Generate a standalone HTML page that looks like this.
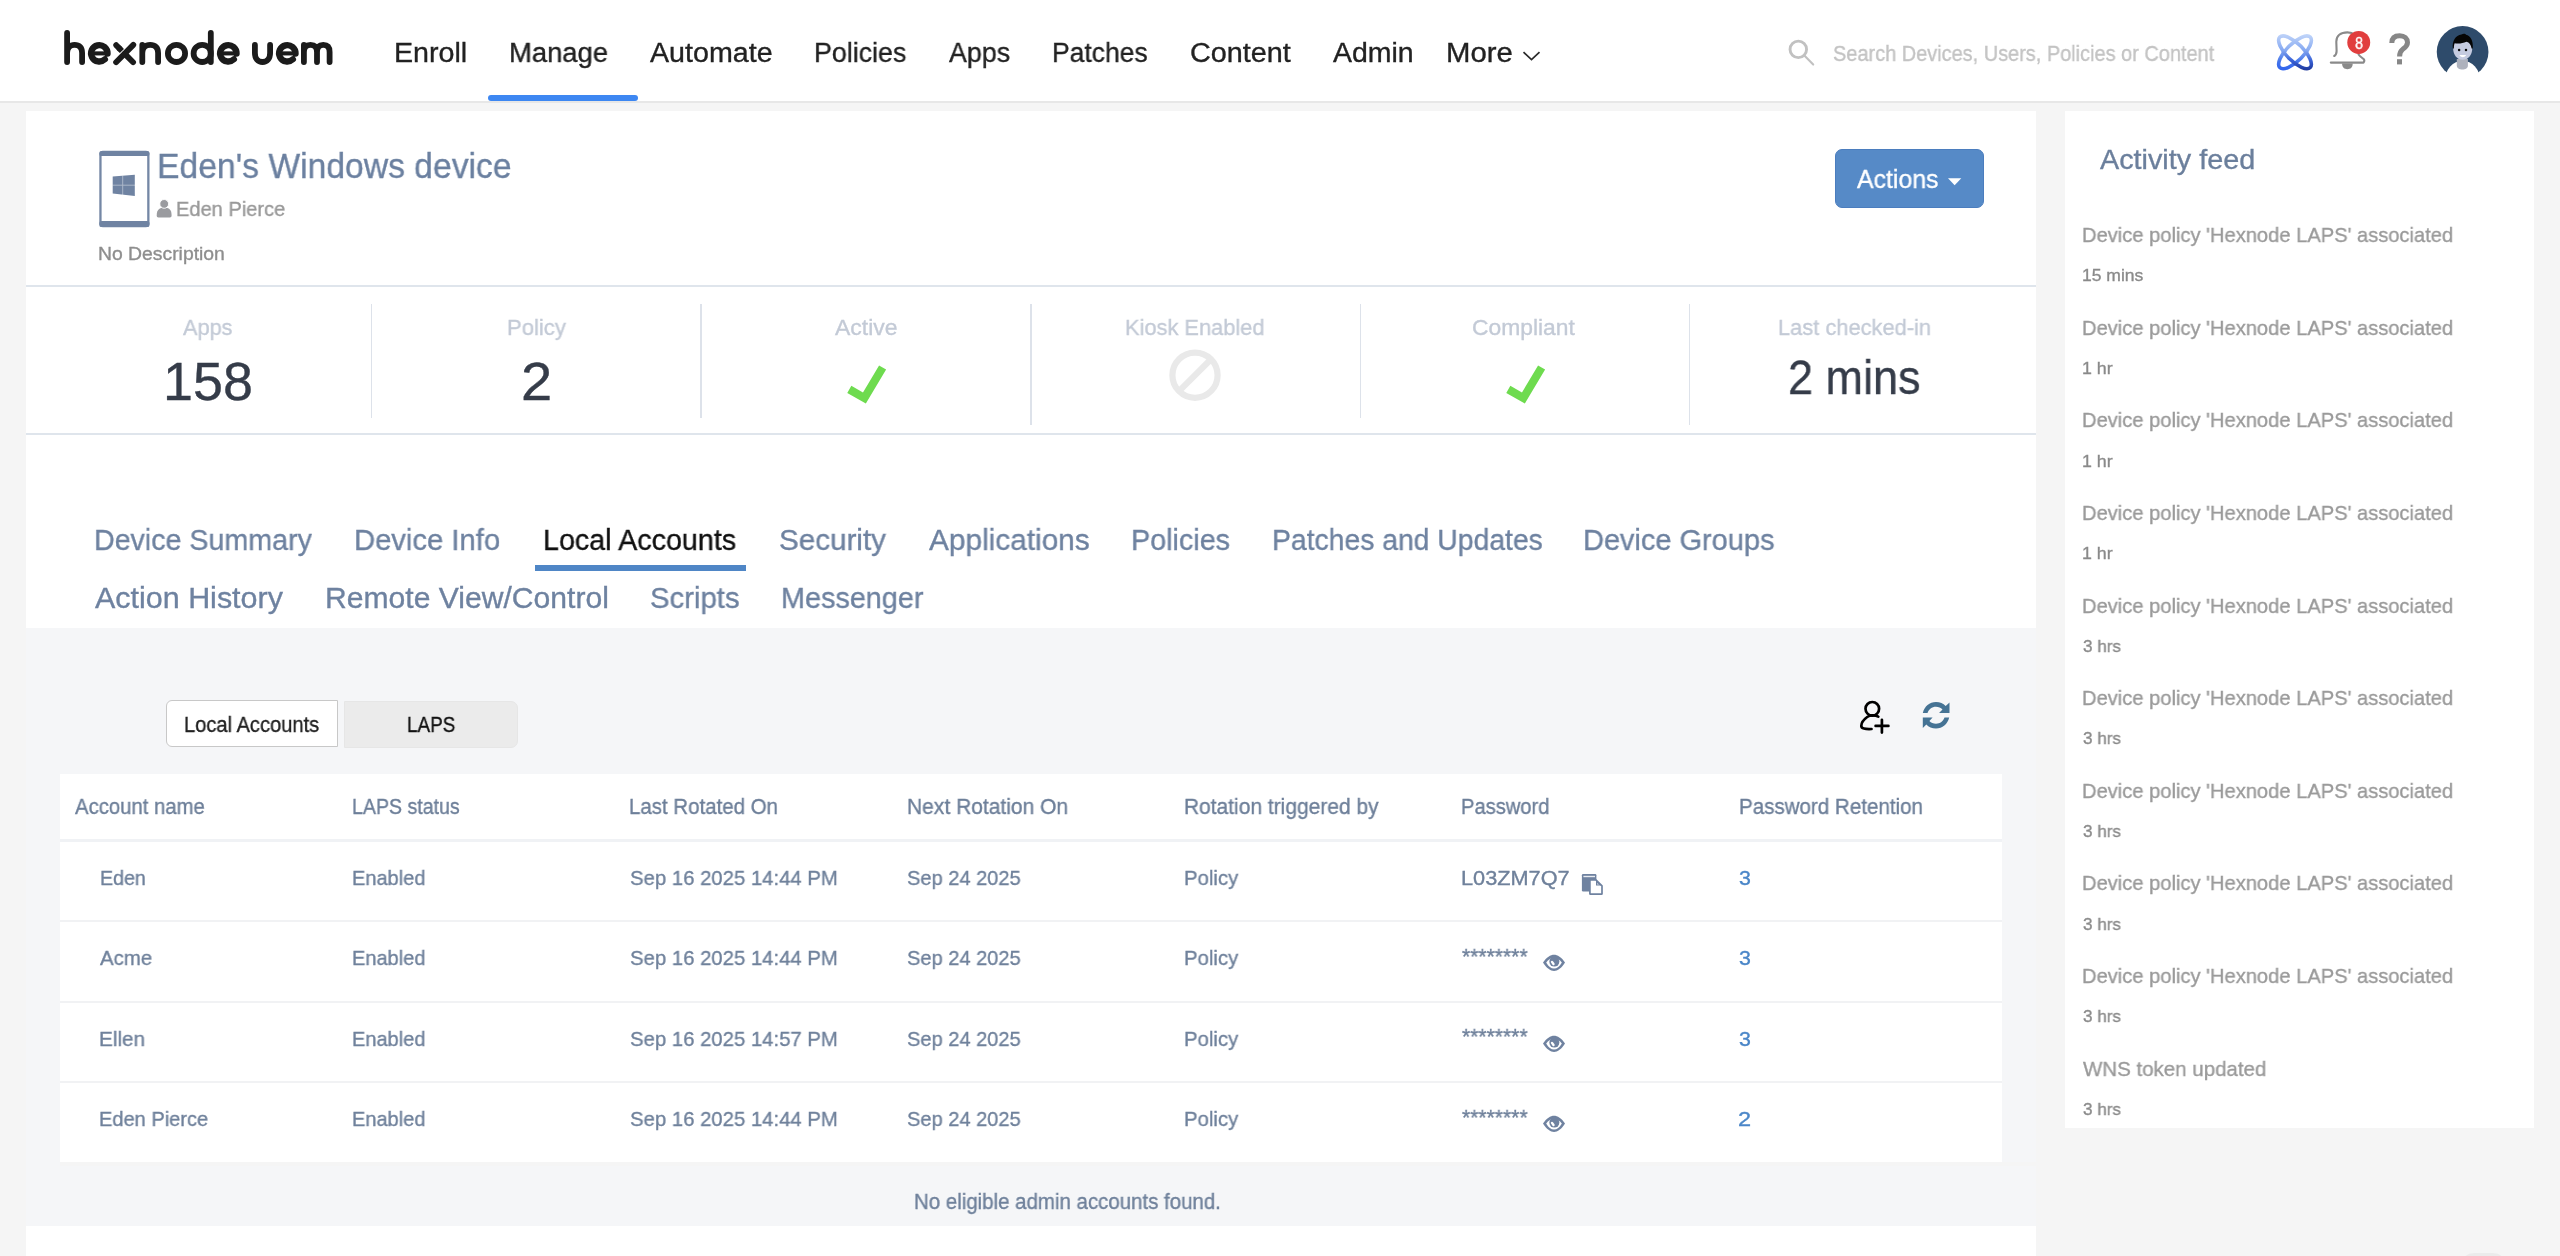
<!DOCTYPE html>
<html>
<head>
<meta charset="utf-8">
<title>Eden's Windows device - Hexnode UEM</title>
<style>
html,body{margin:0;padding:0}
body{width:2560px;height:1256px;overflow:hidden;position:relative;background:#f5f5f5;font-family:"Liberation Sans",sans-serif}
.b{position:absolute}
.t{position:absolute;white-space:nowrap;transform-origin:0 0;font-family:"Liberation Sans",sans-serif;will-change:transform;-webkit-text-stroke:0.35px currentColor}
svg{position:absolute;overflow:visible}
</style>
</head>
<body>
<!-- header -->
<div class="b" style="left:0;top:0;width:2560px;height:101px;background:#fff"></div>
<div class="b" style="left:0;top:101px;width:2560px;height:2px;background:#e7e7e7"></div>
<div class="b" style="left:488.2px;top:95.4px;width:149.8px;height:5.4px;background:#3d87f2;border-radius:3px"></div>

<!-- logo -->
<svg style="left:0;top:0" width="360" height="100" viewBox="0 0 360 100">
<g fill="none" stroke="#1b1b1b" stroke-width="5.8" stroke-linecap="round" stroke-linejoin="round">
<path d="M67.1,62 V33 M67.1,53 C67.1,47.5 70.2,44.9 74.6,44.9 C79.1,44.9 82.1,47.5 82.1,53 V62"/>
<path d="M107.50,53.6 A8.20,8.20 0 1 0 104.90,59.3" stroke-width="6.3"/><path d="M90.85,53.4 H110.15" stroke-width="4.1" stroke-linecap="butt"/>
<path d="M116.2,45.2 L119.5,48.6"/><path d="M118.5,47.6 L121.9,51.0" stroke-linecap="butt"/><path d="M124.8,53.9 L133.1,62.2" /><path d="M133.3,44.9 L116.1,62.2"/>
<path d="M142.3,62 V44.9 M142.3,53 C142.3,47.5 145.5,44.9 150.2,44.9 C154.9,44.9 158.1,47.5 158.1,53 V62"/>
<circle cx="176.5" cy="53.4" r="8.6"/>
<circle cx="202.2" cy="53.4" r="8.6"/>
<path d="M210.8,33 V62"/>
<path d="M236.50,53.6 A8.20,8.20 0 1 0 233.90,59.3" stroke-width="6.3"/><path d="M219.85,53.4 H239.15" stroke-width="4.1" stroke-linecap="butt"/>
<path d="M254.9,44.9 V53 C254.9,58.5 258,62 262.5,62 C267,62 270.1,58.5 270.1,53 V44.9"/>
<path d="M295.50,53.6 A8.20,8.20 0 1 0 292.90,59.3" stroke-width="6.3"/><path d="M278.85,53.4 H298.15" stroke-width="4.1" stroke-linecap="butt"/>
<path d="M303.9,62 V44.9 M303.9,52 C303.9,47 306.5,44.9 310.5,44.9 C314.5,44.9 317,47 317,52 V62 M317,52 C317,47 319.5,44.9 323.3,44.9 C327.1,44.9 329.6,47 329.6,52 V62"/>
</g>
</svg>

<!-- More chevron -->
<svg style="left:1520px;top:48px" width="24" height="16" viewBox="0 0 24 16">
<path d="M3.5,4.2 L11.5,11.6 L19.5,4.2" fill="none" stroke="#2a2a2a" stroke-width="1.7"/>
</svg>

<!-- search icon -->
<svg style="left:1784px;top:36px" width="36" height="36" viewBox="0 0 36 36">
<circle cx="14.3" cy="13.4" r="8.25" fill="none" stroke="#c1c1c1" stroke-width="2.9"/>
<path d="M20.1,19.2 L29.2,28.6" stroke="#c1c1c1" stroke-width="2.1" stroke-linecap="round"/>
</svg>

<!-- atom icon -->
<svg style="left:2270px;top:27px" width="50" height="50" viewBox="0 0 50 50">
<defs>
<linearGradient id="ga" gradientUnits="userSpaceOnUse" x1="25" y1="6" x2="25" y2="44" gradientTransform="rotate(-45 25 25.3)">
<stop offset="0" stop-color="#c3d6f9"/><stop offset="0.45" stop-color="#86a9f2"/><stop offset="0.72" stop-color="#3a63d8"/><stop offset="1" stop-color="#1b3496"/>
</linearGradient>
<linearGradient id="gb" gradientUnits="userSpaceOnUse" x1="25" y1="6" x2="25" y2="44" gradientTransform="rotate(45 25 25.3)">
<stop offset="0" stop-color="#c6d9fa"/><stop offset="0.45" stop-color="#8aacf2"/><stop offset="0.75" stop-color="#4475ea"/><stop offset="1" stop-color="#2f62ee"/>
</linearGradient>
</defs>
<ellipse cx="25" cy="25.3" rx="21.5" ry="8.5" transform="rotate(-45 25 25.3)" fill="none" stroke="url(#gb)" stroke-width="3.6"/>
<ellipse cx="25" cy="25.3" rx="21.5" ry="8.5" transform="rotate(45 25 25.3)" fill="none" stroke="url(#ga)" stroke-width="3.6"/>
</svg>

<!-- bell -->
<svg style="left:2326px;top:28px" width="48" height="46" viewBox="0 0 48 46">
<path d="M8.2,28 C9.8,27 10.6,25.5 10.6,22.9 L10.3,13.7 C10.3,8 14.5,4.4 21.5,4.4 C27.5,4.4 31.5,8 31.8,13.7 L32.6,26.5 C34,28.5 36.5,30 37.8,31.2 C38.4,32 38.4,33.5 37.5,34.6 L4.8,34.6" fill="none" stroke="#8a8a8a" stroke-width="2.1" stroke-linejoin="round" stroke-linecap="round"/>
<path d="M16.1,35.5 C16.1,39.5 18.2,41.2 21.4,41.2 C24.6,41.2 26.7,39.5 26.7,35.5 Z" fill="#8a8a8a"/>
<circle cx="32.75" cy="14.45" r="11.45" fill="#e13e3e"/>
</svg>

<!-- help -->
<svg style="left:2384px;top:30px" width="32" height="38" viewBox="0 0 32 38">
<path d="M7.8,13 C7.8,7 11.5,5.7 15.7,5.7 C20.5,5.7 23.5,8.5 23.5,12.5 C23.5,16 21,17.5 18.5,19.5 C16.5,21 15.6,22.5 15.6,26.6" fill="none" stroke="#878787" stroke-width="5"/>
<rect x="13" y="29.2" width="5" height="5.2" fill="#878787"/>
</svg>

<!-- avatar -->
<svg style="left:2432px;top:20px" width="62" height="62" viewBox="0 0 62 62">
<circle cx="30.6" cy="31.95" r="25.85" fill="#2e4b6b"/>
<ellipse cx="30.6" cy="60.6" rx="17.5" ry="19.9" fill="#ffffff"/>
<path d="M24.8,39 L35.9,39 L35.9,45.5 C35.9,48 33.5,49.6 30.4,49.6 C27.3,49.6 24.8,48 24.8,45.5 Z" fill="#aeb2bd"/>
<path d="M21.2,29 C21.2,22 25,18.2 30.7,18.2 C36.4,18.2 40.2,22 40.2,29 C40.2,34.5 36.5,39.8 30.7,39.8 C24.9,39.8 21.2,34.5 21.2,29 Z" fill="#c5cbe0"/>
<path d="M20.8,28.6 C20,21 23.5,15.6 29.5,14.6 C31,13.6 33.4,13.6 34,14.8 C38.6,16 41.3,20.5 40.8,28.4 L39.6,28.6 C39,24.6 37.3,22.5 34.5,21.8 C30.5,23.6 26,24 22.5,23.2 C22,25 21.8,26.8 21.8,28.6 Z" fill="#050505"/>
<circle cx="27.1" cy="30" r="1.25" fill="#0a0a0a"/>
<circle cx="34" cy="30" r="1.25" fill="#0a0a0a"/>
<path d="M27.3,34.9 C29.5,37.9 32,37.9 34.2,34.9 Z" fill="#ffffff"/>
</svg>

<!-- main card -->
<div class="b" style="left:26px;top:111px;width:2010px;height:517px;background:#fff"></div>
<div class="b" style="left:26px;top:285px;width:2010px;height:2px;background:#dfe5ec"></div>
<div class="b" style="left:26px;top:433px;width:2010px;height:2px;background:#dfe5ec"></div>
<div class="b" style="left:370.8px;top:304px;width:1.6px;height:114px;background:#dde2ea"></div>
<div class="b" style="left:700.4px;top:304px;width:1.6px;height:114px;background:#dde2ea"></div>
<div class="b" style="left:1030px;top:304px;width:1.6px;height:121px;background:#dde2ea"></div>
<div class="b" style="left:1359.6px;top:304px;width:1.6px;height:114px;background:#dde2ea"></div>
<div class="b" style="left:1688.6px;top:304px;width:1.6px;height:121px;background:#dde2ea"></div>

<!-- device icon -->
<svg style="left:90px;top:140px" width="70" height="96" viewBox="0 0 70 96">
<rect x="10.45" y="12" width="47.9" height="74" rx="2.5" fill="none" stroke="#7487a5" stroke-width="2.3"/>
<rect x="9.3" y="10.9" width="50.2" height="5.2" rx="2.2" fill="#6f83a2"/>
<rect x="9.3" y="80.9" width="50.2" height="6.2" rx="2.2" fill="#6f83a2"/>
<path d="M22.7,36.5 L44.8,34.8 L44.8,55.9 L22.7,53.5 Z" fill="#6f83a2"/>
<path d="M32.7,35.5 L32.7,55 M22.5,45.2 L45,45.2" stroke="#ffffff" stroke-width="0.9" opacity="0.45"/>
</svg>

<!-- user glyph -->
<svg style="left:154px;top:196px" width="22" height="24" viewBox="0 0 22 24">
<path d="M2.7,19.4 C2.7,15 4.5,12.4 7.5,11.9 L13.1,11.9 C16.1,12.4 17.6,15 17.6,19.4 C17.6,20.6 17,21.4 15.8,21.4 L4.5,21.4 C3.3,21.4 2.7,20.6 2.7,19.4 Z" fill="#9a9b9f"/>
<circle cx="10.2" cy="7.9" r="4.4" fill="#9a9b9f" stroke="#ffffff" stroke-width="0.9"/>
</svg>

<!-- actions button -->
<div class="b" style="left:1834.8px;top:149px;width:147.4px;height:56.8px;background:#568ac7;border:1px solid #4b7dbe;border-radius:7px"></div>
<svg style="left:1944px;top:174px" width="22" height="16" viewBox="0 0 22 16">
<path d="M4,4.2 L17.3,4.2 L10.65,11.3 Z" fill="#fff"/>
</svg>

<!-- check marks -->
<svg style="left:840px;top:358px" width="54" height="50" viewBox="0 0 54 50">
<path d="M9.3,31.4 L24.4,40 L42.6,9.5" fill="none" stroke="#6edb4f" stroke-width="8.2" stroke-linejoin="miter"/>
</svg>
<svg style="left:1499px;top:358px" width="54" height="50" viewBox="0 0 54 50">
<path d="M9.3,31.4 L24.4,40 L42.6,9.5" fill="none" stroke="#6edb4f" stroke-width="8.2" stroke-linejoin="miter"/>
</svg>

<!-- kiosk ban -->
<svg style="left:1165px;top:345px" width="60" height="60" viewBox="0 0 60 60">
<circle cx="30" cy="30.2" r="22.6" fill="none" stroke="#e9e9e9" stroke-width="6.2"/>
<path d="M14.8,45.4 L45.2,15" stroke="#e9e9e9" stroke-width="6.2"/>
</svg>

<!-- tab underline -->
<div class="b" style="left:534.7px;top:565px;width:211.4px;height:5.5px;background:#4f86c6"></div>

<!-- content area -->
<div class="b" style="left:26px;top:628px;width:2010px;height:598px;background:#f5f6f8"></div>
<div class="b" style="left:26px;top:1226px;width:2010px;height:30px;background:#fff"></div>

<!-- segmented -->
<div class="b" style="left:166px;top:700px;width:170.3px;height:44.9px;background:#fff;border:1.5px solid #c8c8c8;border-radius:6px 0 0 6px"></div>
<div class="b" style="left:344.2px;top:700.7px;width:171.6px;height:44.9px;background:#ebebeb;border:1px solid #e6e6e6;border-radius:0 7px 7px 0"></div>

<!-- add user icon -->
<svg style="left:1850px;top:692px" width="48" height="48" viewBox="0 0 48 48">
<g fill="none" stroke="#000" stroke-width="2.7" stroke-linecap="round">
<circle cx="22.3" cy="16.8" r="6.8"/>
<path d="M28.3,24.6 C25,23 20,23 17.2,25 C13,28 11.3,31 11.3,34 C11.3,36.5 15,37.3 21.5,37"/>
<path d="M31.9,27.8 V40.6 M25.6,33.9 H38.4"/>
</g>
</svg>

<!-- refresh icon -->
<svg style="left:1918px;top:698px" width="36" height="36" viewBox="0 0 36 36">
<g fill="#457394">
<path d="M4.8,15 C6.5,8.3 11.5,4 18,4 C22,4 25.3,5.5 27.7,8 L31.5,4.6 L31.5,15 L21,15 L24.5,11.6 C22.8,9.8 20.6,8.8 18,8.8 C13.8,8.8 10.7,11.4 9.5,15 Z"/>
<path d="M31.2,19.6 C29.5,26.3 24.5,30.6 18,30.6 C14,30.6 10.7,29.1 8.3,26.6 L4.8,30.1 L4.8,19.6 L14.6,19.6 L11.4,23 C13.1,24.8 15.3,25.8 18,25.8 C22.2,25.8 25.3,23.2 26.5,19.6 Z"/>
</g>
</svg>

<!-- table -->
<div class="b" style="left:60px;top:774px;width:1941.7px;height:387.5px;background:#fff"></div>
<div class="b" style="left:60px;top:839px;width:1941.7px;height:3px;background:#f0f2f5"></div>
<div class="b" style="left:60px;top:920px;width:1941.7px;height:2px;background:#f1f2f4"></div>
<div class="b" style="left:60px;top:1000.6px;width:1941.7px;height:2.2px;background:#f1f2f4"></div>
<div class="b" style="left:60px;top:1081px;width:1941.7px;height:2px;background:#f1f2f4"></div>

<div class="b" style="left:60px;top:1161.7px;width:1976px;height:4px;background:#f5f5f5"></div>

<!-- copy icon -->
<svg style="left:1578px;top:870px" width="30" height="30" viewBox="0 0 30 30">
<rect x="3.9" y="4.1" width="14.5" height="17.4" rx="1.2" fill="#6f82a0"/>
<rect x="5.4" y="5.8" width="11.6" height="1.4" fill="#ffffff" opacity="0.85"/>
<path d="M11.9,9.9 L17.9,9.9 L24.0,15.9 L24.0,23.7 C24.0,24.0 23.8,24.2 23.5,24.2 L12.4,24.2 C12.1,24.2 11.9,24.0 11.9,23.7 Z" fill="#fff" stroke="#6f82a0" stroke-width="1.7" stroke-linejoin="round"/>
<path d="M18.0,10.2 L18.0,15.6 L23.6,15.6 Z" fill="#6f82a0"/>
<path d="M19.3,12.9 L19.3,14.4 L20.8,14.4 Z" fill="#fff"/>
</svg>

<!-- asterisks + eyes -->
<svg style="left:1542.4px;top:954.0px" width="25" height="19" viewBox="0 0 25 19"><path d="M1.0,8.6 C4.5,3.2 8.5,0.8 12.0,0.8 C15.5,0.8 19.5,3.2 23.0,8.6 C19.5,14.2 15.5,17.1 12.0,17.1 C8.5,17.1 4.5,14.2 1.0,8.6 Z" fill="#6f82a0"/><path d="M4.2,8.6 C6.5,5.3 9,3.8 12,3.8 C15,3.8 17.5,5.3 19.8,8.6 C17.5,12.6 15,14.6 12,14.6 C9,14.6 6.5,12.6 4.2,8.6 Z" fill="#fff"/><circle cx="12.35" cy="7.6" r="5.0" fill="#6f82a0"/><path d="M10.0,7.9 L11.5,10.0" stroke="#fff" stroke-width="2.4" stroke-linecap="round"/></svg>
<svg style="left:1542.4px;top:1034.6px" width="25" height="19" viewBox="0 0 25 19"><path d="M1.0,8.6 C4.5,3.2 8.5,0.8 12.0,0.8 C15.5,0.8 19.5,3.2 23.0,8.6 C19.5,14.2 15.5,17.1 12.0,17.1 C8.5,17.1 4.5,14.2 1.0,8.6 Z" fill="#6f82a0"/><path d="M4.2,8.6 C6.5,5.3 9,3.8 12,3.8 C15,3.8 17.5,5.3 19.8,8.6 C17.5,12.6 15,14.6 12,14.6 C9,14.6 6.5,12.6 4.2,8.6 Z" fill="#fff"/><circle cx="12.35" cy="7.6" r="5.0" fill="#6f82a0"/><path d="M10.0,7.9 L11.5,10.0" stroke="#fff" stroke-width="2.4" stroke-linecap="round"/></svg>
<svg style="left:1542.4px;top:1114.9px" width="25" height="19" viewBox="0 0 25 19"><path d="M1.0,8.6 C4.5,3.2 8.5,0.8 12.0,0.8 C15.5,0.8 19.5,3.2 23.0,8.6 C19.5,14.2 15.5,17.1 12.0,17.1 C8.5,17.1 4.5,14.2 1.0,8.6 Z" fill="#6f82a0"/><path d="M4.2,8.6 C6.5,5.3 9,3.8 12,3.8 C15,3.8 17.5,5.3 19.8,8.6 C17.5,12.6 15,14.6 12,14.6 C9,14.6 6.5,12.6 4.2,8.6 Z" fill="#fff"/><circle cx="12.35" cy="7.6" r="5.0" fill="#6f82a0"/><path d="M10.0,7.9 L11.5,10.0" stroke="#fff" stroke-width="2.4" stroke-linecap="round"/></svg>

<!-- activity card -->
<div class="b" style="left:2065px;top:111px;width:469px;height:1017.4px;background:#fff"></div>

<div class="b" style="left:2460px;top:1252.6px;width:47px;height:40px;background:#ebebeb;border-radius:14px"></div>
<div class="t" style="left:394.37px;top:38.25px;font-size:28.20px;line-height:28.20px;color:#222222;transform:scaleX(1.0159)">Enroll</div>
<div class="t" style="left:508.96px;top:38.25px;font-size:28.20px;line-height:28.20px;color:#222222;transform:scaleX(0.9719)">Manage</div>
<div class="t" style="left:650.00px;top:38.25px;font-size:28.20px;line-height:28.20px;color:#222222;transform:scaleX(1.0161)">Automate</div>
<div class="t" style="left:813.70px;top:38.25px;font-size:28.20px;line-height:28.20px;color:#222222;transform:scaleX(0.9512)">Policies</div>
<div class="t" style="left:949.00px;top:38.25px;font-size:28.20px;line-height:28.20px;color:#222222;transform:scaleX(0.9508)">Apps</div>
<div class="t" style="left:1052.12px;top:38.25px;font-size:28.20px;line-height:28.20px;color:#222222;transform:scaleX(0.9393)">Patches</div>
<div class="t" style="left:1189.98px;top:38.25px;font-size:28.20px;line-height:28.20px;color:#222222;transform:scaleX(1.0215)">Content</div>
<div class="t" style="left:1333.00px;top:38.25px;font-size:28.20px;line-height:28.20px;color:#222222;transform:scaleX(1.0100)">Admin</div>
<div class="t" style="left:1445.92px;top:38.25px;font-size:28.20px;line-height:28.20px;color:#222222;transform:scaleX(1.0399)">More</div>
<div class="t" style="left:2355.00px;top:34.65px;font-size:16.30px;line-height:16.30px;color:#ffffff;transform:scaleX(0.8889)">8</div>
<div class="t" style="left:1832.50px;top:43.75px;font-size:21.40px;line-height:21.40px;color:#c3c3c3;transform:scaleX(0.9322)">Search Devices, Users, Policies or Content</div>
<div class="t" style="left:156.69px;top:147.65px;font-size:35.30px;line-height:35.30px;color:#6b80a0;transform:scaleX(0.9541)">Eden's Windows device</div>
<div class="t" style="left:175.75px;top:197.75px;font-size:21.00px;line-height:21.00px;color:#999999;transform:scaleX(0.9545)">Eden Pierce</div>
<div class="t" style="left:97.77px;top:244.95px;font-size:18.70px;line-height:18.70px;color:#8e8e8e;transform:scaleX(1.0350)">No Description</div>
<div class="t" style="left:1857.30px;top:166.85px;font-size:25.50px;line-height:25.50px;color:#ffffff;transform:scaleX(0.9750)">Actions</div>
<div class="t" style="left:182.60px;top:316.05px;font-size:22.70px;line-height:22.70px;color:#c3cad6;transform:scaleX(0.9578)">Apps</div>
<div class="t" style="left:506.53px;top:316.05px;font-size:22.70px;line-height:22.70px;color:#c3cad6;transform:scaleX(0.9722)">Policy</div>
<div class="t" style="left:834.80px;top:316.05px;font-size:22.70px;line-height:22.70px;color:#c3cad6;transform:scaleX(1.0120)">Active</div>
<div class="t" style="left:1125.04px;top:316.05px;font-size:22.70px;line-height:22.70px;color:#c3cad6;transform:scaleX(0.9615)">Kiosk Enabled</div>
<div class="t" style="left:1472.49px;top:316.05px;font-size:22.70px;line-height:22.70px;color:#c3cad6;transform:scaleX(1.0065)">Compliant</div>
<div class="t" style="left:1778.04px;top:316.05px;font-size:22.70px;line-height:22.70px;color:#c3cad6;transform:scaleX(0.9632)">Last checked-in</div>
<div class="t" style="left:162.91px;top:354.55px;font-size:53.90px;line-height:53.90px;color:#353c49;transform:scaleX(0.9971)">158</div>
<div class="t" style="left:520.82px;top:354.55px;font-size:53.90px;line-height:53.90px;color:#353c49;transform:scaleX(1.0423)">2</div>
<div class="t" style="left:1788.03px;top:353.15px;font-size:48.10px;line-height:48.10px;color:#353c49;transform:scaleX(0.9365)">2 mins</div>
<div class="t" style="left:93.89px;top:525.45px;font-size:30.00px;line-height:30.00px;color:#6e82a0;transform:scaleX(0.9537)">Device Summary</div>
<div class="t" style="left:353.95px;top:525.45px;font-size:30.00px;line-height:30.00px;color:#6e82a0;transform:scaleX(0.9736)">Device Info</div>
<div class="t" style="left:542.59px;top:525.45px;font-size:30.00px;line-height:30.00px;color:#111111;transform:scaleX(0.9573)">Local Accounts</div>
<div class="t" style="left:778.91px;top:525.45px;font-size:30.00px;line-height:30.00px;color:#6e82a0;transform:scaleX(0.9872)">Security</div>
<div class="t" style="left:928.90px;top:525.45px;font-size:30.00px;line-height:30.00px;color:#6e82a0;transform:scaleX(0.9934)">Applications</div>
<div class="t" style="left:1130.88px;top:525.45px;font-size:30.00px;line-height:30.00px;color:#6e82a0;transform:scaleX(0.9584)">Policies</div>
<div class="t" style="left:1271.71px;top:525.45px;font-size:30.00px;line-height:30.00px;color:#6e82a0;transform:scaleX(0.9441)">Patches and Updates</div>
<div class="t" style="left:1583.47px;top:525.45px;font-size:30.00px;line-height:30.00px;color:#6e82a0;transform:scaleX(0.9651)">Device Groups</div>
<div class="t" style="left:94.60px;top:582.75px;font-size:30.00px;line-height:30.00px;color:#6e82a0;transform:scaleX(1.0154)">Action History</div>
<div class="t" style="left:324.59px;top:582.75px;font-size:30.00px;line-height:30.00px;color:#6e82a0;transform:scaleX(1.0034)">Remote View/Control</div>
<div class="t" style="left:650.02px;top:582.75px;font-size:30.00px;line-height:30.00px;color:#6e82a0;transform:scaleX(0.9768)">Scripts</div>
<div class="t" style="left:780.88px;top:582.75px;font-size:30.00px;line-height:30.00px;color:#6e82a0;transform:scaleX(0.9596)">Messenger</div>
<div class="t" style="left:183.97px;top:713.65px;font-size:21.60px;line-height:21.60px;color:#222222;transform:scaleX(0.9303)">Local Accounts</div>
<div class="t" style="left:406.62px;top:713.65px;font-size:21.60px;line-height:21.60px;color:#111111;transform:scaleX(0.8752)">LAPS</div>
<div class="t" style="left:75.20px;top:796.25px;font-size:21.60px;line-height:21.60px;color:#6d7f99;transform:scaleX(0.9404)">Account name</div>
<div class="t" style="left:352.29px;top:796.25px;font-size:21.60px;line-height:21.60px;color:#6d7f99;transform:scaleX(0.9065)">LAPS status</div>
<div class="t" style="left:629.35px;top:796.25px;font-size:21.60px;line-height:21.60px;color:#6d7f99;transform:scaleX(0.9469)">Last Rotated On</div>
<div class="t" style="left:906.63px;top:796.25px;font-size:21.60px;line-height:21.60px;color:#6d7f99;transform:scaleX(0.9730)">Next Rotation On</div>
<div class="t" style="left:1184.23px;top:796.25px;font-size:21.60px;line-height:21.60px;color:#6d7f99;transform:scaleX(0.9701)">Rotation triggered by</div>
<div class="t" style="left:1461.47px;top:796.25px;font-size:21.60px;line-height:21.60px;color:#6d7f99;transform:scaleX(0.9332)">Password</div>
<div class="t" style="left:1738.85px;top:796.25px;font-size:21.60px;line-height:21.60px;color:#6d7f99;transform:scaleX(0.9517)">Password Retention</div>
<div class="t" style="left:99.56px;top:866.55px;font-size:21.00px;line-height:21.00px;color:#6f819b;transform:scaleX(0.9353)">Eden</div>
<div class="t" style="left:352.25px;top:866.55px;font-size:21.00px;line-height:21.00px;color:#6f819b;transform:scaleX(0.9524)">Enabled</div>
<div class="t" style="left:630.30px;top:866.55px;font-size:21.00px;line-height:21.00px;color:#6f819b;transform:scaleX(0.9675)">Sep 16 2025 14:44 PM</div>
<div class="t" style="left:907.00px;top:866.55px;font-size:21.00px;line-height:21.00px;color:#6f819b;transform:scaleX(0.9541)">Sep 24 2025</div>
<div class="t" style="left:1184.23px;top:866.55px;font-size:21.00px;line-height:21.00px;color:#6f819b;transform:scaleX(0.9691)">Policy</div>
<div class="t" style="left:1461.37px;top:866.55px;font-size:21.00px;line-height:21.00px;color:#6f819b;transform:scaleX(1.0341)">L03ZM7Q7</div>
<div class="t" style="left:1739.40px;top:866.55px;font-size:21.00px;line-height:21.00px;color:#4a86c8;transform:scaleX(1.0182)">3</div>
<div class="t" style="left:99.50px;top:946.85px;font-size:21.00px;line-height:21.00px;color:#6f819b;transform:scaleX(0.9717)">Acme</div>
<div class="t" style="left:352.25px;top:946.85px;font-size:21.00px;line-height:21.00px;color:#6f819b;transform:scaleX(0.9524)">Enabled</div>
<div class="t" style="left:630.30px;top:946.85px;font-size:21.00px;line-height:21.00px;color:#6f819b;transform:scaleX(0.9675)">Sep 16 2025 14:44 PM</div>
<div class="t" style="left:907.00px;top:946.85px;font-size:21.00px;line-height:21.00px;color:#6f819b;transform:scaleX(0.9541)">Sep 24 2025</div>
<div class="t" style="left:1184.23px;top:946.85px;font-size:21.00px;line-height:21.00px;color:#6f819b;transform:scaleX(0.9691)">Policy</div>
<div class="t" style="left:1739.40px;top:946.85px;font-size:21.00px;line-height:21.00px;color:#4a86c8;transform:scaleX(1.0182)">3</div>
<div class="t" style="left:98.71px;top:1028.05px;font-size:21.00px;line-height:21.00px;color:#6f819b;transform:scaleX(0.9863)">Ellen</div>
<div class="t" style="left:352.25px;top:1028.05px;font-size:21.00px;line-height:21.00px;color:#6f819b;transform:scaleX(0.9524)">Enabled</div>
<div class="t" style="left:630.30px;top:1028.05px;font-size:21.00px;line-height:21.00px;color:#6f819b;transform:scaleX(0.9675)">Sep 16 2025 14:57 PM</div>
<div class="t" style="left:907.00px;top:1028.05px;font-size:21.00px;line-height:21.00px;color:#6f819b;transform:scaleX(0.9541)">Sep 24 2025</div>
<div class="t" style="left:1184.23px;top:1028.05px;font-size:21.00px;line-height:21.00px;color:#6f819b;transform:scaleX(0.9691)">Policy</div>
<div class="t" style="left:1739.40px;top:1028.05px;font-size:21.00px;line-height:21.00px;color:#4a86c8;transform:scaleX(1.0182)">3</div>
<div class="t" style="left:98.75px;top:1108.05px;font-size:21.00px;line-height:21.00px;color:#6f819b;transform:scaleX(0.9537)">Eden Pierce</div>
<div class="t" style="left:352.25px;top:1108.05px;font-size:21.00px;line-height:21.00px;color:#6f819b;transform:scaleX(0.9524)">Enabled</div>
<div class="t" style="left:630.30px;top:1108.05px;font-size:21.00px;line-height:21.00px;color:#6f819b;transform:scaleX(0.9675)">Sep 16 2025 14:44 PM</div>
<div class="t" style="left:907.00px;top:1108.05px;font-size:21.00px;line-height:21.00px;color:#6f819b;transform:scaleX(0.9541)">Sep 24 2025</div>
<div class="t" style="left:1184.23px;top:1108.05px;font-size:21.00px;line-height:21.00px;color:#6f819b;transform:scaleX(0.9691)">Policy</div>
<div class="t" style="left:1738.28px;top:1108.05px;font-size:21.00px;line-height:21.00px;color:#4a86c8;transform:scaleX(1.1200)">2</div>
<div class="t" style="left:1461.70px;top:945.52px;font-size:21.90px;line-height:21.90px;color:#6f819b;transform:scaleX(0.9631)">********</div>
<div class="t" style="left:1461.70px;top:1026.42px;font-size:21.90px;line-height:21.90px;color:#6f819b;transform:scaleX(0.9631)">********</div>
<div class="t" style="left:1461.70px;top:1107.02px;font-size:21.90px;line-height:21.90px;color:#6f819b;transform:scaleX(0.9631)">********</div>
<div class="t" style="left:913.64px;top:1191.65px;font-size:21.40px;line-height:21.40px;color:#6f819b;transform:scaleX(0.9559)">No eligible admin accounts found.</div>
<div class="t" style="left:2099.80px;top:145.45px;font-size:28.30px;line-height:28.30px;color:#6b7f9c;transform:scaleX(1.0171)">Activity feed</div>
<div class="t" style="left:2081.94px;top:224.15px;font-size:21.00px;line-height:21.00px;color:#9a9a9a;transform:scaleX(0.9580)">Device policy 'Hexnode LAPS' associated</div>
<div class="t" style="left:2081.89px;top:267.45px;font-size:17.30px;line-height:17.30px;color:#8a8a8a;transform:scaleX(1.0139)">15 mins</div>
<div class="t" style="left:2081.94px;top:316.75px;font-size:21.00px;line-height:21.00px;color:#9a9a9a;transform:scaleX(0.9580)">Device policy 'Hexnode LAPS' associated</div>
<div class="t" style="left:2081.87px;top:360.05px;font-size:17.30px;line-height:17.30px;color:#8a8a8a;transform:scaleX(1.0302)">1 hr</div>
<div class="t" style="left:2081.94px;top:409.35px;font-size:21.00px;line-height:21.00px;color:#9a9a9a;transform:scaleX(0.9580)">Device policy 'Hexnode LAPS' associated</div>
<div class="t" style="left:2081.87px;top:452.65px;font-size:17.30px;line-height:17.30px;color:#8a8a8a;transform:scaleX(1.0302)">1 hr</div>
<div class="t" style="left:2081.94px;top:501.95px;font-size:21.00px;line-height:21.00px;color:#9a9a9a;transform:scaleX(0.9580)">Device policy 'Hexnode LAPS' associated</div>
<div class="t" style="left:2081.87px;top:545.25px;font-size:17.30px;line-height:17.30px;color:#8a8a8a;transform:scaleX(1.0302)">1 hr</div>
<div class="t" style="left:2081.94px;top:594.55px;font-size:21.00px;line-height:21.00px;color:#9a9a9a;transform:scaleX(0.9580)">Device policy 'Hexnode LAPS' associated</div>
<div class="t" style="left:2082.90px;top:637.85px;font-size:17.30px;line-height:17.30px;color:#8a8a8a;transform:scaleX(0.9877)">3 hrs</div>
<div class="t" style="left:2081.94px;top:687.15px;font-size:21.00px;line-height:21.00px;color:#9a9a9a;transform:scaleX(0.9580)">Device policy 'Hexnode LAPS' associated</div>
<div class="t" style="left:2082.90px;top:730.45px;font-size:17.30px;line-height:17.30px;color:#8a8a8a;transform:scaleX(0.9877)">3 hrs</div>
<div class="t" style="left:2081.94px;top:779.75px;font-size:21.00px;line-height:21.00px;color:#9a9a9a;transform:scaleX(0.9580)">Device policy 'Hexnode LAPS' associated</div>
<div class="t" style="left:2082.90px;top:823.05px;font-size:17.30px;line-height:17.30px;color:#8a8a8a;transform:scaleX(0.9877)">3 hrs</div>
<div class="t" style="left:2081.94px;top:872.35px;font-size:21.00px;line-height:21.00px;color:#9a9a9a;transform:scaleX(0.9580)">Device policy 'Hexnode LAPS' associated</div>
<div class="t" style="left:2082.90px;top:915.65px;font-size:17.30px;line-height:17.30px;color:#8a8a8a;transform:scaleX(0.9877)">3 hrs</div>
<div class="t" style="left:2081.94px;top:964.95px;font-size:21.00px;line-height:21.00px;color:#9a9a9a;transform:scaleX(0.9580)">Device policy 'Hexnode LAPS' associated</div>
<div class="t" style="left:2082.90px;top:1008.25px;font-size:17.30px;line-height:17.30px;color:#8a8a8a;transform:scaleX(0.9877)">3 hrs</div>
<div class="t" style="left:2082.90px;top:1057.55px;font-size:21.00px;line-height:21.00px;color:#9a9a9a;transform:scaleX(0.9756)">WNS token updated</div>
<div class="t" style="left:2082.90px;top:1100.85px;font-size:17.30px;line-height:17.30px;color:#8a8a8a;transform:scaleX(0.9877)">3 hrs</div>
</body>
</html>
